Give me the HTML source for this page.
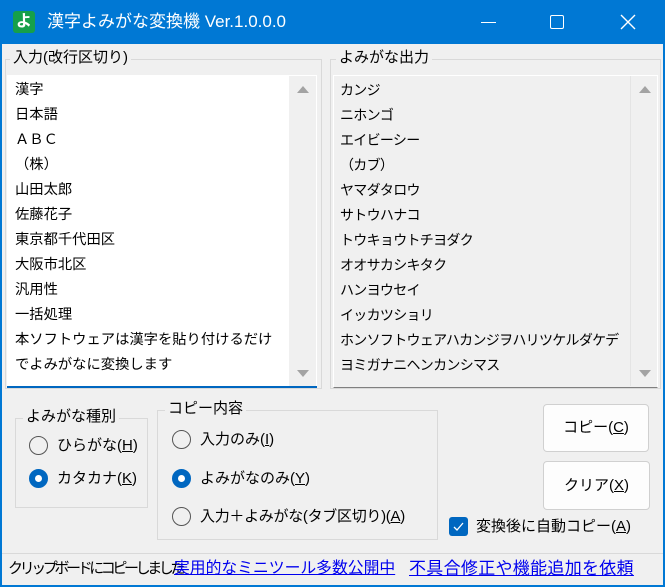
<!DOCTYPE html>
<html><head><meta charset="utf-8"><style>
*{margin:0;padding:0;box-sizing:border-box}
body{width:665px;height:587px;background:#0078d4;position:relative;overflow:hidden;font-family:"Liberation Sans","Noto Sans CJK JP",sans-serif;font-size:15px;color:#000}
.a{position:absolute}
#client{left:2px;top:44px;width:661px;height:541px;background:#f0f0f0}
.gb{position:absolute;border:1px solid #d9d9d9}
.gl{position:absolute;background:#f0f0f0;padding:0 3px;line-height:18px;font-size:15px}
.ln{height:25px;line-height:25px;white-space:nowrap}
.sb{position:absolute;width:27px;background:#f0f0f0}
.up{position:absolute;left:8px;width:0;height:0;border-left:6px solid transparent;border-right:6px solid transparent;border-bottom:7px solid #a3a3a3}
.dn{position:absolute;left:8px;width:0;height:0;border-left:6px solid transparent;border-right:6px solid transparent;border-top:7px solid #a3a3a3}
.rad{position:absolute;width:19px;height:19px;border-radius:50%;border:1px solid #555;background:#f0f0f0}
.rad.on{background:#0067c0;border-color:#0067c0}
.rad.on::after{content:"";position:absolute;left:5px;top:5px;width:7px;height:7px;border-radius:50%;background:#fff}
.rt{position:absolute;line-height:20px;white-space:nowrap}
.btn{position:absolute;background:#fdfdfd;border:1px solid #d0d0d0;border-radius:4px;text-align:center}
u{text-decoration:underline}
a{color:#0000ee;text-decoration:underline}
</style></head><body>
<div class="a" style="left:13px;top:11px;width:22px;height:22px;background:#16a04a;border-radius:3px;color:#fff;font-size:16px;line-height:22px;text-align:center;font-weight:bold">よ</div>
<div class="a" style="left:47px;top:10px;color:#fff;font-size:17px;line-height:24px">漢字よみがな変換機 Ver.1.0.0.0</div>
<div class="a" style="left:481px;top:22px;width:15px;height:1px;background:#fff"></div>
<div class="a" style="left:550px;top:15px;width:14px;height:14px;border:1.5px solid #fff;border-radius:2px"></div>
<svg class="a" style="left:620px;top:14px" width="16" height="16"><path d="M1 1L15 15M15 1L1 15" stroke="#fff" stroke-width="1.4"/></svg>

<div class="a" id="client"></div>

<div class="gb" style="left:5px;top:59px;width:317px;height:330px"></div>
<div class="gl" style="left:10px;top:49px">入力(改行区切り)</div>
<div class="a" style="left:7px;top:75px;width:310px;height:313px;background:#fff;border-bottom:2px solid #0067c0"></div>
<div class="a" style="left:15px;top:78px;font-size:14.3px">
<div class="ln">漢字</div><div class="ln">日本語</div><div class="ln">ＡＢＣ</div><div class="ln">（株）</div><div class="ln">山田太郎</div><div class="ln">佐藤花子</div><div class="ln">東京都千代田区</div><div class="ln">大阪市北区</div><div class="ln">汎用性</div><div class="ln">一括処理</div><div class="ln">本ソフトウェアは漢字を貼り付けるだけ</div><div class="ln">でよみがなに変換します</div></div>
<div class="sb" style="left:289px;top:76px;height:310px"><div class="up" style="top:10px"></div><div class="dn" style="top:294px"></div></div>

<div class="gb" style="left:330px;top:59px;width:331px;height:330px"></div>
<div class="gl" style="left:336px;top:49px">よみがな出力</div>
<div class="a" style="left:333px;top:75px;width:325px;height:313px;background:#f0f0f0;border:1px solid #fff;border-bottom:1px solid #808080"></div>
<div class="a" style="left:340px;top:78px;font-size:14px;letter-spacing:-0.7px">
<div class="ln">カンジ</div><div class="ln">ニホンゴ</div><div class="ln">エイビーシー</div><div class="ln">（カブ）</div><div class="ln">ヤマダタロウ</div><div class="ln">サトウハナコ</div><div class="ln">トウキョウトチヨダク</div><div class="ln">オオサカシキタク</div><div class="ln">ハンヨウセイ</div><div class="ln">イッカツショリ</div><div class="ln">ホンソフトウェアハカンジヲハリツケルダケデ</div><div class="ln">ヨミガナニヘンカンシマス</div></div>
<div class="sb" style="left:630px;top:76px;height:310px;border-left:1px solid #e4e4e4"><div class="up" style="top:10px"></div><div class="dn" style="top:294px"></div></div>

<div class="gb" style="left:15px;top:418px;width:133px;height:90px"></div>
<div class="gl" style="left:23px;top:408px">よみがな種別</div>
<div class="rad" style="left:29px;top:436px"></div><div class="rt" style="left:57px;top:436px">ひらがな(<u>H</u>)</div>
<div class="rad on" style="left:29px;top:469px"></div><div class="rt" style="left:57px;top:469px">カタカナ(<u>K</u>)</div>

<div class="gb" style="left:157px;top:410px;width:281px;height:130px"></div>
<div class="gl" style="left:165px;top:400px">コピー内容</div>
<div class="rad" style="left:172px;top:430px"></div><div class="rt" style="left:200px;top:430px">入力のみ(<u>I</u>)</div>
<div class="rad on" style="left:172px;top:469px"></div><div class="rt" style="left:200px;top:469px">よみがなのみ(<u>Y</u>)</div>
<div class="rad" style="left:172px;top:507px"></div><div class="rt" style="left:200px;top:507px;letter-spacing:-0.3px">入力＋よみがな(タブ区切り)(<u>A</u>)</div>

<div class="btn" style="left:543px;top:404px;width:106px;height:48px;line-height:46px">コピー(<u>C</u>)</div>
<div class="btn" style="left:543px;top:461px;width:107px;height:49px;line-height:47px">クリア(<u>X</u>)</div>
<div class="a" style="left:449px;top:517px;width:19px;height:19px;background:#0067c0;border-radius:3px"><svg width="19" height="19"><path d="M5 10l3 3 6-7" stroke="#fff" stroke-width="1.3" fill="none"/></svg></div>
<div class="rt" style="left:476px;top:517px">変換後に自動コピー(<u>A</u>)</div>

<div class="a" style="left:2px;top:553px;width:661px;height:1px;background:#d9d9d9"></div>
<div class="rt" style="left:8px;top:559px;font-size:15px;letter-spacing:-3.4px">クリップボードにコピーしました</div>
<div class="rt" style="left:174px;top:559px;font-size:15.8px"><a>実用的なミニツール多数公開中</a></div>
<div class="rt" style="left:409px;top:559px;font-size:17px;letter-spacing:0.3px"><a>不具合修正や機能追加を依頼</a></div>
</body></html>
